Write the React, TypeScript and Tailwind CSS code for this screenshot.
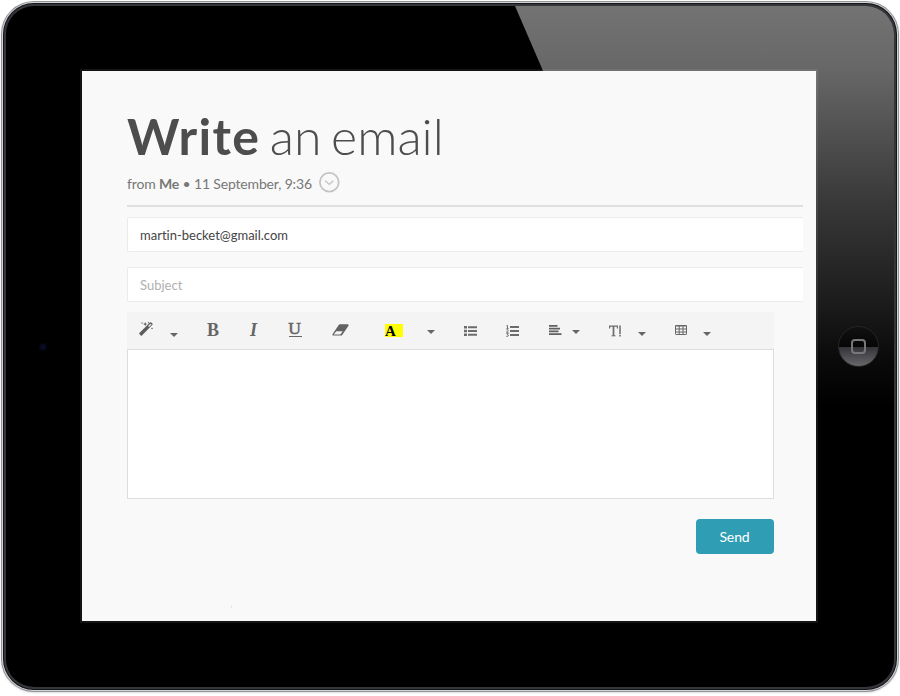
import type { ReactNode } from "react";

function Caret({ className = "" }: { className?: string }) {
  return (
    <svg viewBox="0 0 8 4" className={`h-[4px] w-[8px] shrink-0 fill-[#666] ${className}`}>
      <path d="M0 0h8L4 4z" />
    </svg>
  );
}

function Slot({ className, children }: { className: string; children: ReactNode }) {
  return <div className={`flex h-full shrink-0 items-center ${className}`}>{children}</div>;
}

function Wand() {
  return (
    <svg viewBox="0 0 15 15" className="h-[15px] w-[15px] fill-[#5c5c5c]">
      <path fillRule="evenodd" d="M.4 12 11 1.4q.6-.5 1.200 0l1.200 1.200q.5.6 0 1.200L2.900 14.400q-.6.5-1.100 0L.4 13.100q-.5-.5 0-1.100zM9.200 5.100 10.100 6 12.500 3.600 11.600 2.700z" />
      <path d="m3 .8.3.9.9.3-.9.3-.3.9-.3-.9-.9-.3.9-.3zM6.2 1l.6 1.5 1.5.6-1.5.6-.6 1.5-.6-1.5-1.5-.6 1.5-.6zM9.5.6l.3.9.9.3-.9.3-.3.9-.3-.9-.9-.3.9-.3zM13 6.2l.3.9.9.3-.9.3-.3.9-.3-.9-.9-.3.9-.3z" />
    </svg>
  );
}

function Eraser() {
  return (
    <svg viewBox="0 0 17 12" className="h-[12px] w-[17px] fill-[#626262]">
      <path fillRule="evenodd" d="M6.700.9Q7.200.3 8 .3h7.700q1.300.2.800 1.400L10.200 10.900q-.5.7-1.300.7H1.200q-1.200-.2-.7-1.400zM1.700 10.600H8.300L10.800 7.200H4.300z" />
    </svg>
  );
}

function BulletList() {
  return (
    <svg viewBox="0 0 13 10" className="h-[10px] w-[13px] fill-[#6c6c6c]">
      <path d="M0 0h3v2.500H0zM0 3.750h3v2.500H0zM0 7.500h3V10H0zM4 .2h9v2H4zM4 4h9v2H4zM4 7.800h9v2H4z" />
    </svg>
  );
}

function NumberList() {
  return (
    <svg viewBox="0 0 13 12" className="h-[12px] w-[13px] fill-[#6c6c6c]">
      <path d="M4 1h9v2H4zM4 5h9v2H4zM4 9h9v2H4z" />
      <path d="M.4.8 1.5.3v3M.4 3.4h2.2M.4 4.9q1.9-.8 1.9.3L.5 7.3h2.1M.4 8.6h1.9L1.3 9.7q1.4 0 1 1.3-.6.9-2 .3" fill="none" stroke="#666" strokeWidth=".9" />
    </svg>
  );
}

function AlignLeft() {
  return (
    <svg viewBox="0 0 13 10" className="h-[10px] w-[13px] fill-[#606060]">
      <path d="M0 0h8.500v1.800H0zM0 2.700h11v1.800H0zM0 5.400h9.500v1.800H0zM0 8.200h12.500V10H0z" />
    </svg>
  );
}

function TextSize() {
  return (
    <svg viewBox="0 0 13 12" className="h-[12px] w-[13px]" fill="none" stroke="#6c6c6c">
      <path d="M.6 3.500V1.200h7.800v2.300" strokeWidth="1.200" />
      <path d="M4.500 1v10" strokeWidth="1.700" />
      <path d="M2.500 10.800h4" strokeWidth="1" />
      <path d="M11 .6v8.400M11 9.700v1.800" strokeWidth="1.500" />
    </svg>
  );
}

function TableGrid() {
  return (
    <svg viewBox="0 0 12 10" className="h-[10px] w-[12px]" fill="none" stroke="#666">
      <rect x=".5" y=".5" width="11" height="9" rx=".6" />
      <path d="M0 1h12M4.2 1v9M8 1v9M0 4h12M0 7h12" />
    </svg>
  );
}

function Toolbar() {
  return (
    <div className="flex h-[37px] w-[647px] bg-[#f4f4f4] font-['Liberation_Serif',serif] text-[18px] leading-none text-[#666]">
      <Slot className="w-[43px] pb-[4px] pl-[12px]"><Wand /></Slot>
      <Slot className="w-[37px] pt-[9px]"><Caret /></Slot>
      <Slot className="w-[43px] pb-px font-bold"><span>B</span></Slot>
      <Slot className="w-[39px] pb-px font-bold italic"><span>I</span></Slot>
      <Slot className="w-[43px] pb-[3px]">
        <span className="w-[13px] border-b border-[#666] text-center text-[16px] leading-[14px]"><span className="block -translate-x-px scale-x-110 [-webkit-text-stroke:0.5px]">U</span></span>
      </Slot>
      <Slot className="w-[53px] pb-[2px]"><Eraser /></Slot>
      <Slot className="w-[42px] pb-px"><span className="flex h-[13px] w-[18px] items-center bg-[#ff0] pt-[3px] text-[15px] font-bold leading-none text-black">A</span></Slot>
      <Slot className="w-[37px] pt-[3px]"><Caret /></Slot>
      <Slot className="w-[42px]"><BulletList /></Slot>
      <Slot className="w-[43px] pt-px"><NumberList /></Slot>
      <Slot className="w-[23px] pb-px"><AlignLeft /></Slot>
      <Slot className="w-[37px] pt-[3px]"><Caret /></Slot>
      <Slot className="w-[29px]"><TextSize /></Slot>
      <Slot className="w-[37px] pt-[7px]"><Caret /></Slot>
      <Slot className="w-[28px] pb-px"><TableGrid /></Slot>
      <Slot className="pt-[7px]"><Caret /></Slot>
    </div>
  );
}

function Composer() {
  return (
    <main className="relative h-[550px] w-[734px] overflow-hidden bg-[#f9f9f9] pl-[45px] pt-[35px] shadow-[0_0_0_2px_rgba(255,255,255,0.08)] [font-variant-ligatures:none]">
      <h1 className="h-[60px] whitespace-nowrap text-[50px] font-light leading-[60px] text-[#4d4d4d] [word-spacing:-4px]">
        <b className="font-bold tracking-[1.3px]">Write</b> an email
      </h1>
      <div className="flex h-[41px] w-[676px] items-start border-b-2 border-[#dfdfdf] pt-[8px] text-[14px] leading-[20px] tracking-[-0.16px] text-[#777]">
        <span className="whitespace-nowrap">from <b>Me</b> • 11 September, 9:36</span>
      </div>
      <svg viewBox="0 0 22 22" className="absolute left-[236px] top-[100px] size-[22px]" fill="none" stroke="#c4c4c4">
        <circle cx="11.300" cy="11.300" r="9.400" strokeWidth="1.800" />
        <path d="m7.200 9.700 4.100 3.700 4.100-3.700" strokeWidth="1.400" />
      </svg>
      <div className="mt-[10px] flex h-[35px] w-[676px] items-center rounded-l-[2px] border border-r-0 border-[#ebebeb] bg-white pl-[12px] pt-[2px] text-[13px] text-[#444]">martin-becket@gmail.com</div>
      <div className="mb-[10px] mt-[15px] flex h-[35px] w-[676px] items-center rounded-l-[2px] border border-r-0 border-[#ebebeb] bg-white pl-[12px] pt-[2px] text-[13px] text-[#b0b0b0]">Subject</div>
      <Toolbar />
      <div className="h-[150px] w-[647px] border border-[#ddd] bg-white" />
      <div className="flex w-[647px] justify-end pt-[20px]">
        <button className="h-[35px] w-[78px] rounded-[4px] bg-[#2f9db4] pr-px text-[14px] tracking-[-0.1px] text-white">Send</button>
      </div>
      <span className="ml-[104px] mt-[51px] block h-[3px] w-px bg-[#e7e7e7]" />
    </main>
  );
}

export default function App() {
  return (
    <div className="h-[696px] w-[900px] overflow-hidden bg-white pl-px pt-px font-['Lato',sans-serif]">
      <div className="h-[691px] w-[898px] rounded-[33px] bg-[#929497] p-px shadow-[0_1px_2px_#ddd]">
        <div className="h-full rounded-[32px] bg-[#d2d3d5] p-px">
          <div className="h-full rounded-[31px] bg-[#131418] p-px">
            <div className="h-full rounded-[30px] bg-[#34363a] p-[2px]">
              <div className="relative h-full overflow-hidden rounded-[28px] bg-black pl-[76px] pt-[65px]">
                <div className="absolute inset-0 bg-[linear-gradient(180deg,#737373_0px,#686868_60px,#393939_195px,#1c1c1c_295px,#0b0b0b_350px,#000_400px)] [clip-path:polygon(509px_0,100%_0,100%_410px,686px_410px)]" />
                <Composer />
                <span className="absolute left-[33px] top-[337px] size-[8px] rounded-full bg-[radial-gradient(circle,#0a0a2c_15%,#08081a_50%,#030306_80%)]" />
                <div className="absolute left-[832px] top-[320px] flex size-[41px] items-center justify-center rounded-full border border-[#252525] bg-[linear-gradient(180deg,#101010_0%,#060606_51%,#343438_52%,#68686c_100%)]">
                  <span className="size-[15px] rounded-[4px] border-2 border-[#77777a]" />
                </div>
              </div>
            </div>
          </div>
        </div>
      </div>
    </div>
  );
}
